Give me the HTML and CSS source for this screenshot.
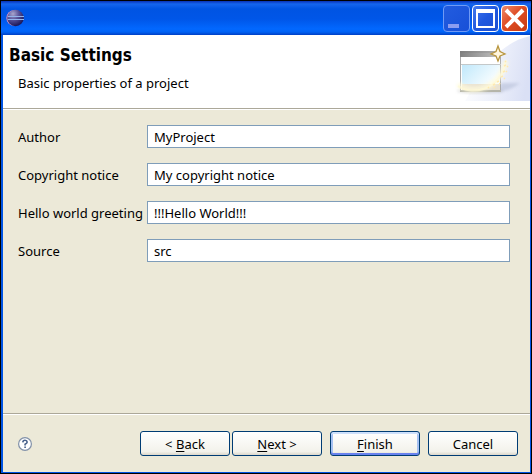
FILE: index.html
```html
<!DOCTYPE html>
<html lang="en">
<head>
<meta charset="utf-8">
<title>Basic Settings</title>
<link rel="stylesheet" href="styles.css">
</head>
<body>
<div class="window">
  <div class="titlebar">
    <svg class="app-icon" viewBox="0 0 20 20" aria-hidden="true">
      <defs>
        <radialGradient id="ball" cx="0.35" cy="0.25" r="0.8">
          <stop offset="0" stop-color="#a9a6cd"/>
          <stop offset="0.45" stop-color="#57529a"/>
          <stop offset="1" stop-color="#15104f"/>
        </radialGradient>
      </defs>
      <circle cx="9" cy="10" r="8.6" fill="#e79ac6"/>
      <circle cx="10.500" cy="10" r="9.200" fill="url(#ball)"/>
      <path d="M2 8.300h18M2 11.600h18" stroke="#94b4ea" stroke-width="1.200"/>
    </svg>
    <div class="controls">
      <button class="control minimize" type="button" aria-label="Minimize">
        <svg viewBox="0 0 25 25"><path d="M4 18h11v4H4z" fill="#8c9df0"/></svg>
      </button>
      <button class="control" type="button" aria-label="Maximize">
        <svg viewBox="0 0 25 25"><path d="M3 3h19v19H3zM5 7v13h15V7z" fill="#fff" fill-rule="evenodd"/></svg>
      </button>
      <button class="control close" type="button" aria-label="Close">
        <svg viewBox="0 0 25 25"><path d="M4 4l17 17M21 4L4 21" stroke="#fff" stroke-width="4"/></svg>
      </button>
    </div>
  </div>
  <header class="header">
    <div class="heading">
      <h1>Basic Settings</h1>
      <p>Basic properties of a project</p>
    </div>
    <svg class="banner" viewBox="0 0 75 66" aria-hidden="true">
      <defs>
        <linearGradient id="sweep" x1="0" y1="0.300" x2="1" y2="0.500">
          <stop offset="0" stop-color="#fff"/>
          <stop offset="0.500" stop-color="#eef1fb"/>
          <stop offset="1" stop-color="#dae0f5"/>
        </linearGradient>
        <linearGradient id="bar" x1="0" y1="0" x2="1" y2="0">
          <stop offset="0" stop-color="#808080"/>
          <stop offset="1" stop-color="#c4c4c4"/>
        </linearGradient>
        <linearGradient id="sky" x1="0" y1="0" x2="1" y2="0.500">
          <stop offset="0" stop-color="#c0e8fb"/>
          <stop offset="1" stop-color="#f8fdff"/>
        </linearGradient>
        <filter id="soft" x="-20%" y="-50%" width="140%" height="200%"><feGaussianBlur stdDeviation="1.4"/></filter>
      </defs>
      <path d="M10 66C22 48 36 10 75 1V66z" fill="url(#sweep)"/>
      <path d="M46 48Q57 48 65 48Q55 56 43 57z" fill="#bcc4dc" opacity=".7" filter="url(#soft)"/>
      <ellipse cx="25" cy="56" rx="23" ry="2" fill="#999" opacity=".4" filter="url(#soft)"/>
      <path d="M5 22h41v34H5z" fill="#fff"/>
      <path d="M5 16h41v6H5z" fill="url(#bar)"/>
      <path d="M5 17h41" stroke="#707070" opacity=".4"/>
      <path d="M7 30h38v19H7z" fill="url(#sky)"/>
      <path d="M7 49h38v6H7z" fill="#eae3d2"/>
      <path d="M5.500 22V56M45.500 22V56" stroke="#aaa" fill="none"/>
      <path d="M6 29.500H46" stroke="#c4c8c9"/>
      <path d="M5 56H46" stroke="#b5b5aa" stroke-width="2"/>
      <path d="M3 49C13 59 43 58 51 26" fill="none" stroke="#fffbdc" stroke-width="6" opacity=".7" filter="url(#soft)"/>
      <path d="M3 51C15 60 45 58 51 25" fill="none" stroke="#fffad5" stroke-width="2" opacity=".7"/>
      <path d="M33 53l1-1M38 50l2-1M39 53l1-1M42 47l2-1M44 50l1-2M46 42l2-1M49 44l1-1M48 37l2-1M51 37l1-1M49 31l2-1M52 31l1 1M50 27l1-1" stroke="#ffe9b0" stroke-width="1.500"/>
      <path d="M43 12L45 17.500L50 20L45 22L43 27L41 22L36 20L41 17.500z" transform="translate(0 -1)" fill="#fff6df" stroke="#b8963f" stroke-width="1.300"/>
    </svg>
  </header>
  <form class="page">
    <div class="fields">
      <label for="author">Author</label>
      <input id="author" type="text" value="MyProject">
      <label for="copyright">Copyright notice</label>
      <input id="copyright" type="text" value="My copyright notice">
      <label for="greeting">Hello world greeting</label>
      <input id="greeting" type="text" value="!!!Hello World!!!">
      <label for="source">Source</label>
      <input id="source" type="text" value="src">
    </div>
    <div class="footer">
      <button class="help" type="button" aria-label="Help">
        <svg viewBox="0 0 14 14"><circle cx="7" cy="7" r="6.400" fill="#fff" stroke="#8291a8" stroke-width="1.200"/><path d="M4.800 5.300Q5 3.300 7 3.300T9.200 5.100Q9.200 6.200 7.100 7.300V8.500M7.100 9.600V11" fill="none" stroke="#48618b" stroke-width="1.600"/></svg>
      </button>
      <div class="actions">
        <div class="pair">
          <button class="action" type="button">&lt; <u>B</u>ack</button>
          <button class="action" type="button"><u>N</u>ext &gt;</button>
        </div>
        <button class="action default" type="button"><u>F</u>inish</button>
        <button class="action" type="button">Cancel</button>
      </div>
    </div>
  </form>
</div>
</body>
</html>
```
FILE: styles.css
```css
* {
  box-sizing: border-box;
}

body {
  margin: 0;
  background: #000;
  color: #000;
  font: 13px/18px "Noto Sans", "DejaVu Sans Condensed", sans-serif;
}

button,
input {
  font: inherit;
  color: inherit;
}

.window {
  display: flex;
  flex-direction: column;
  min-height: 100vh;
  border: 1px solid #000;
  background: #ece9d8;
}

.titlebar {
  display: flex;
  align-items: center;
  justify-content: space-between;
  height: 34px;
  padding: 0 3px 0 5px;
  background: linear-gradient(#0831b4 0, #1565ee 3px, #0054e3 8px, #0056e8 18px, #0268ff 28px, #0062f4 31px, #003fc4 34px);
}

.app-icon {
  width: 18px;
  height: 18px;
}

.controls {
  display: flex;
  gap: 2px;
}

.control {
  width: 27px;
  height: 27px;
  padding: 0;
  border: 1px solid #fff;
  border-radius: 4px;
  background: linear-gradient(135deg, #4479ee, #2058df 50%, #1c50d2);
}

.control svg {
  display: block;
  width: 25px;
  height: 25px;
}

.minimize {
  border-color: #6f9af5;
  background: linear-gradient(135deg, #225cdf, #1850d8);
}

.close {
  background: linear-gradient(135deg, #ed8c6c, #df4c24 45%, #c63a10);
}

.header {
  display: flex;
  justify-content: space-between;
  height: 74px;
  border: solid #0054e3;
  border-width: 0 1px 0 2px;
  background: #fff;
  box-shadow: inset 0 -1px #aca899;
}

.heading {
  padding: 10px 0 0 6px;
}

h1 {
  margin: 0;
  font-family: "DejaVu Sans Condensed", "Noto Sans", sans-serif;
  font-size: 17px;
  line-height: 20px;
}

p {
  margin: 9px 0 0 9px;
}

.banner {
  width: 75px;
  height: 66px;
}

.page {
  display: flex;
  flex: 1;
  flex-direction: column;
  border: solid #0054e3;
  border-width: 0 1px 1px 2px;
}

.fields {
  display: grid;
  flex: 1;
  grid-template-columns: 119px 1fr;
  align-content: start;
  align-items: center;
  gap: 15px 10px;
  padding: 15px 20px 15px 15px;
  border-top: 1px solid #fff;
  white-space: nowrap;
}

.fields input {
  width: 100%;
  height: 23px;
  padding: 0 6px;
  border: 1px solid #7f9db9;
  border-radius: 0;
  background: #fff;
}

.footer {
  display: flex;
  align-items: center;
  justify-content: space-between;
  height: 59px;
  padding: 1px 12px 0 15px;
  border-top: 1px solid #aca899;
  box-shadow: inset 0 1px #fff;
}

.help {
  padding: 0;
  border: 0;
  background: none;
}

.help svg {
  display: block;
  width: 14px;
  height: 14px;
}

.actions {
  display: flex;
  gap: 8px;
}

.pair {
  display: flex;
  gap: 2px;
}

.action {
  width: 90px;
  height: 25px;
  padding: 0;
  border: 1px solid #003c74;
  border-radius: 3px;
  background: linear-gradient(#fff, #f3f2eb 85%, #dcd7cb);
}

.default {
  box-shadow: inset 0 2px #cee0fb, inset 0 -2px #6982ee, inset 2px 0 #a6c1f2, inset -2px 0 #a6c1f2;
}

u {
  text-underline-offset: 2px;
}
```
